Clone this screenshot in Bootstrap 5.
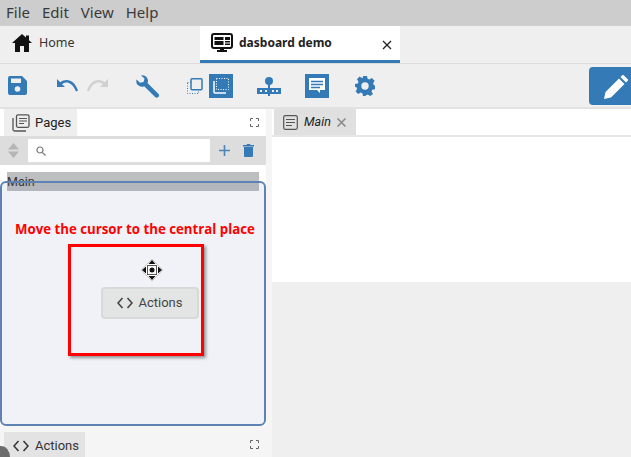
<!DOCTYPE html>
<html lang="en">
<head>
<meta charset="utf-8">
<title>dasboard demo</title>
<link href="https://cdn.jsdelivr.net/npm/bootstrap@5.3.0/dist/css/bootstrap.min.css" rel="stylesheet">
<style>
html,body{width:631px;height:457px;overflow:hidden;background:#f5f5f5;font-family:"Noto Sans",sans-serif;color:#222}
.menu-strip{height:26px;background:#cdcdcd;font-size:15px;color:#3a3a3a;padding-left:6px;gap:12px;line-height:25px}
.tab-strip{height:38px;background:#efefef;border-bottom:1px solid #dcdcdc}
.home-tab{width:200px;padding-left:12px;gap:7px;font-size:12.5px;color:#333;padding-bottom:3px}
.doc-tab{width:200px;height:37px;background:#fff;border-bottom:3px solid #337ab7;padding-left:11px;padding-right:8px;gap:6px;font-size:12px;font-weight:700;color:#222}
.tool-strip{height:45px;background:#efefef;border-bottom:2px solid #e2e2e2;position:relative}
.tool-icon{position:absolute;display:block}
.edit-btn{position:absolute;left:589px;top:3px;width:42px;height:38px;background:#337ab7;border-radius:4px 0 0 4px}
.work-area{height:348px}
.left-pane{width:266px;position:relative;background:#f5f5f5}
.gutter{width:6px;background:#f5f5f5}
.right-pane{width:359px;background:#efefef}
.pane-tabs{height:28px;background:#fff;border-bottom:2px solid #e6e6e6}
.left-tabs{height:27px;background:#fff;padding-left:4px;padding-right:10px}
.pages-tab{width:73px;height:27px;background:#eee;padding-left:8px;gap:5px;font-size:13px;font-family:Roboto,sans-serif;padding-top:1px}
.search-strip{height:29px;background:#ddd;padding-left:28px;position:relative}
.search-box{width:182px;height:23px;background:#fff;padding-left:8px}
.list-area{height:261px;background:#fff;padding:7px 7px 0}
.page-sel{width:252px;height:19px;background:#bcbec0;font-size:12.5px;font-family:Roboto,sans-serif;line-height:19px;color:#333}
.drop-zone{position:absolute;left:0;top:72px;width:266px;height:245px;background:rgba(85,115,165,.09);border:2px solid #5f82b5;border-radius:6px}
.hint-text{position:absolute;left:15px;top:111px;font-size:13.25px;font-weight:700;color:#f00;white-space:nowrap;line-height:19px;font-family:"Open Sans",sans-serif;z-index:3}
.red-frame{position:absolute;left:68px;top:135px;width:136px;height:112px;border:3px solid #f00;box-shadow:2px 2px 3px rgba(0,0,0,.4);z-index:3}
.drag-chip{position:absolute;left:101px;top:178px;width:98px;height:32px;background:#e3e4e4;border:2px solid #d8d9d9;border-radius:4px;font-size:13px;font-family:Roboto,sans-serif;color:#444;gap:5px;z-index:4}
.cursor-mark{position:absolute;left:141px;top:150px;z-index:5;display:block}
.actions-tabs{position:absolute;left:4px;top:323px;width:81px;height:25px;background:#e3e3e3;font-size:13px;font-family:Roboto,sans-serif;padding-left:9px;padding-top:2px;gap:6px;color:#333}
.expand-a{position:absolute;left:250px;top:9px}
.expand-b{position:absolute;left:250px;top:331px}
.corner-blob{position:absolute;left:-8px;top:337px;width:18px;height:22px;border-radius:50%;background:#6c6c6c;z-index:6}
.main-tab{width:82px;height:26px;background:#e0e0e0;margin-left:2px;padding-left:9px;gap:6px;font-size:12.5px;font-family:Roboto,sans-serif}
.white-pad{height:145px;background:#fff}
</style>
</head>
<body>
<div class="menu-strip d-flex">
  <span>File</span><span>Edit</span><span>View</span><span>Help</span>
</div>
<div class="tab-strip d-flex">
  <div class="home-tab d-flex align-items-center">
    <svg width="20" height="18" viewBox="0 0 20 18"><path fill="#111" d="M10 0 0 9h3v9h5v-6h4v6h5V9h3l-3-2.7V1.500h-3v2.100z"/></svg>
    <span>Home</span>
  </div>
  <div class="doc-tab d-flex align-items-center">
    <svg width="22" height="20" viewBox="0 0 22 20"><rect x="1" y="1" width="20" height="14" rx="2" fill="none" stroke="#111" stroke-width="2"/><rect x="3.500" y="4" width="9" height="3" fill="#111"/><rect x="3.500" y="8" width="9" height="4" fill="#111"/><rect x="14" y="4" width="5" height="3" fill="#111"/><rect x="14" y="8" width="5" height="1.500" fill="#111"/><rect x="14" y="10.500" width="5" height="1.500" fill="#111"/><path fill="#111" d="M9 15h4v2h3v2H6v-2h3z"/></svg>
    <span class="flex-grow-1">dasboard demo</span>
    <svg width="10" height="10" viewBox="0 0 10 10" class="mt-1"><path d="M1 1l8 8M9 1l-8 8" stroke="#222" stroke-width="1.300"/></svg>
  </div>
</div>
<div class="tool-strip">
  <svg class="tool-icon" style="left:8px;top:12px" width="19" height="19" viewBox="0 0 19 19"><path fill="#337ab7" d="M2 0h12l5 5v12a2 2 0 0 1-2 2H2a2 2 0 0 1-2-2V2a2 2 0 0 1 2-2z"/><rect x="3" y="2.500" width="10" height="4.500" fill="#efefef"/><circle cx="9.500" cy="13" r="2.800" fill="#efefef"/></svg>
  <svg class="tool-icon" style="left:57px;top:15px" width="21" height="13" viewBox="0 0 21 13"><path fill="#337ab7" d="M0 0v8h8L5 5.200C9 2 15 3 19 12.500l2-1C18 2 10-2 3.200 3.200z"/></svg>
  <svg class="tool-icon" style="left:87px;top:15px" width="21" height="13" viewBox="0 0 21 13"><path fill="#d0d0d0" d="M21 0v8h-8l3-2.800C12 2 6 3 2 12.500l-2-1C3 2 11-2 17.800 3.200z"/></svg>
  <svg class="tool-icon" style="left:136px;top:11px" width="23" height="23" viewBox="0 0 23 23"><path fill="#337ab7" d="M5 .5a5.500 5.500 0 0 1 6.500 7.500L22.300 18.800a2.200 2.200 0 0 1-3.200 3.200L8.200 11.200A5.500 5.500 0 0 1 .6 4.500L4 7.800 7.600 7 8.500 3.600z"/></svg>
  <svg class="tool-icon" style="left:187px;top:14px" width="16" height="16" viewBox="0 0 16 16"><rect x=".5" y="4.500" width="11" height="11" fill="none" stroke="#337ab7" stroke-dasharray="1 1.500"/><rect x="4" y=".8" width="11" height="11" rx="1" fill="#efefef" stroke="#337ab7" stroke-width="1.500"/></svg>
  <div class="tool-icon" style="left:209px;top:10px;width:24px;height:24px;background:#337ab7"></div>
  <svg class="tool-icon" style="left:213px;top:14px" width="16" height="16" viewBox="0 0 16 16"><rect x="3.500" y=".5" width="12" height="11" fill="none" stroke="#fff" stroke-dasharray="1 1.500"/><path d="M1 3v11a1 1 0 0 0 1 1h11" fill="none" stroke="#fff" stroke-width="1.500"/></svg>
  <svg class="tool-icon" style="left:257px;top:13px" width="24" height="19" viewBox="0 0 24 19"><circle cx="12" cy="4" r="4" fill="#337ab7"/><rect x="11" y="6" width="2" height="13" fill="#337ab7"/><rect y="11" width="24" height="6" fill="#337ab7"/><rect x="3" y="13" width="2" height="2" fill="#efefef"/><rect x="8" y="13" width="2" height="2" fill="#efefef"/><rect x="15" y="13" width="2" height="2" fill="#efefef"/><rect x="19" y="13" width="2" height="2" fill="#efefef"/></svg>
  <div class="tool-icon" style="left:305px;top:10px;width:24px;height:24px;background:#337ab7"></div>
  <svg class="tool-icon" style="left:308px;top:13px" width="18" height="18" viewBox="0 0 18 18"><path fill="#fff" d="M1 1h16v12h-5v3l-3-3H1z"/><path stroke="#337ab7" stroke-width="1.500" d="M3 4.500h12M3 7.500h12M3 10.500h9"/></svg>
  <svg class="tool-icon" style="left:355px;top:12px" width="20" height="20" viewBox="0 0 20 20"><path fill="#337ab7" fill-rule="evenodd" d="M8 0h4l.6 2.800 1.700.7L16.800 2l2.800 2.800-1.500 2.500.7 1.700L20 9.800v3.400l-2.800.6-.7 1.700 1.500 2.500-2.800 2-2.500-1.500-1.700.7L10.400 20H8l-.6-2.800-1.700-.7L3.200 18 .6 15.500l1.500-2.500-.7-1.700L0 10.800V8l2.800-.6.7-1.700L2 3.200 4.500.6 7 2.100l1-.4zM10 6.300a3.700 3.700 0 1 0 0 7.400 3.700 3.700 0 0 0 0-7.400z"/></svg>
  <div class="edit-btn">
    <svg class="tool-icon" style="left:15px;top:8px" width="24" height="24" viewBox="0 0 24 24"><path fill="#fff" d="M0 24l1.500-7L15 3.500l5.500 5.500L7 22.500zM16.500 2l1.800-1.800a1 1 0 0 1 1.400 0l4.100 4.100a1 1 0 0 1 0 1.400L22 7.500z"/></svg>
  </div>
</div>
<div class="work-area d-flex">
  <div class="left-pane">
    <div class="left-tabs d-flex">
      <div class="pages-tab d-flex align-items-center">
        <svg width="18" height="18" viewBox="0 0 18 18"><rect x="4.500" y=".8" width="12.500" height="12.500" rx="1.500" fill="none" stroke="#555" stroke-width="1.300"/><path d="M1 4v11.500A1.500 1.500 0 0 0 2.500 17H14" fill="none" stroke="#555" stroke-width="1.300"/><path d="M7 4.500h8M7 7h8M7 9.500h5" stroke="#555" stroke-width="1.200"/></svg>
        <span>Pages</span>
      </div>
    </div>
    <svg class="expand-a" width="9" height="9" viewBox="0 0 9 9"><path d="M.5 3V.5H3M6 .5h2.500V3M8.500 6v2.500H6M3 8.500H.5V6" fill="none" stroke="#666"/></svg>
    <div class="search-strip d-flex align-items-center">
      <svg class="tool-icon" style="left:8px;top:7px" width="11" height="15" viewBox="0 0 11 15"><path fill="#b5b5b5" d="M5.500 0 11 6.500H0zM5.500 15 0 8.500h11z"/></svg>
      <div class="search-box d-flex align-items-center">
        <svg width="10" height="10" viewBox="0 0 10 10"><circle cx="4" cy="4" r="3" fill="none" stroke="#777" stroke-width="1.200"/><path d="M6.300 6.300 9.500 9.500" stroke="#777" stroke-width="1.200"/></svg>
      </div>
      <svg class="tool-icon" style="left:219px;top:9px" width="11" height="11" viewBox="0 0 11 11"><path d="M5.500 0v11M0 5.500h11" stroke="#4a86ba" stroke-width="1.600"/></svg>
      <svg class="tool-icon" style="left:243px;top:8px" width="11" height="13" viewBox="0 0 11 13"><path fill="#337ab7" d="M1 3h9v9a1 1 0 0 1-1 1H2a1 1 0 0 1-1-1zM0 1h3.500l.5-1h3l.5 1H11v1.500H0z"/></svg>
    </div>
    <div class="list-area">
      <div class="page-sel">Main</div>
    </div>
    <div class="drop-zone"></div>
    <div class="hint-text">Move the cursor to the central place</div>
    <div class="red-frame"></div>
    <svg class="cursor-mark" width="22" height="22" viewBox="0 0 22 22"><path fill="#fff" stroke="#ccc" d="M11 0 22 11 11 22 0 11z"/><path fill="#111" d="M11 1l3.500 4h-7zM11 21l-3.500-4h7zM1 11l4-3.500v7zM21 11l-4 3.500v-7z"/><rect x="6.500" y="6.500" width="9" height="9" fill="#fff" stroke="#555"/><circle cx="11" cy="11" r="2.500" fill="#111"/></svg>
    <div class="drag-chip d-flex align-items-center justify-content-center">
      <svg width="16" height="12" viewBox="0 0 16 12"><path d="M5.500 1 1 6l4.500 5M10.500 1 15 6l-4.500 5" fill="none" stroke="#444" stroke-width="1.600"/></svg>
      <span>Actions</span>
    </div>
    <div class="actions-tabs d-flex align-items-center">
      <svg width="16" height="12" viewBox="0 0 16 12"><path d="M5.500 1 1 6l4.500 5M10.500 1 15 6l-4.500 5" fill="none" stroke="#333" stroke-width="1.500"/></svg>
      <span>Actions</span>
    </div>
    <svg class="expand-b" width="9" height="9" viewBox="0 0 9 9"><path d="M.5 3V.5H3M6 .5h2.500V3M8.500 6v2.500H6M3 8.500H.5V6" fill="none" stroke="#666"/></svg>
    <div class="corner-blob"></div>
  </div>
  <div class="gutter"></div>
  <div class="right-pane">
    <div class="pane-tabs d-flex">
      <div class="main-tab d-flex align-items-center">
        <svg width="15" height="15" viewBox="0 0 15 15"><rect x=".7" y=".7" width="13.600" height="13.600" rx="1.500" fill="none" stroke="#555" stroke-width="1.200"/><path d="M3 4.500h9M3 7.500h9M3 10.500h6" stroke="#555" stroke-width="1.200"/></svg>
        <em>Main</em>
        <svg width="9" height="9" viewBox="0 0 9 9"><path d="M.5.500l8 8M8.500.500l-8 8" stroke="#888" stroke-width="1.500"/></svg>
      </div>
    </div>
    <div class="white-pad"></div>
  </div>
</div>
</body>
</html>
